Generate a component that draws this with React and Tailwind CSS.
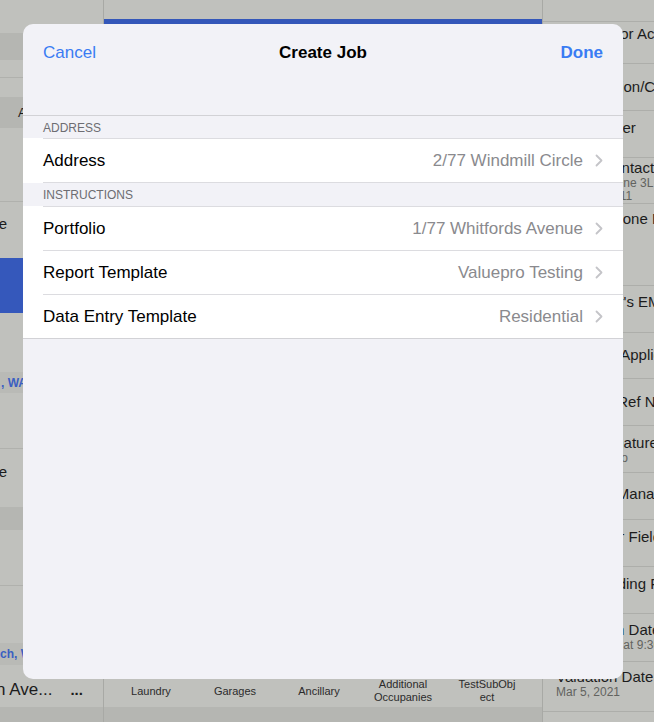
import React from "react";

const rightRows = [
  { h: "h-[42px]", pt: "pt-[3px]", t: "Purpose for Action" },
  { h: "h-[47px]", pt: "pt-[14px]", t: "Construction/Contract" },
  { h: "h-[47px]", pt: "pt-[8px]", t: "Lead Valuer" },
  { h: "h-[46px]", pt: "pt-[1px]", t: "Valuer Contact", s: ["Mrs Jacqueline 3L", "Ph 0400 11 11"] },
  { h: "h-[82px]", pt: "pt-[6px]", t: "Mobile Phone Number" },
  { h: "h-[47px]", pt: "pt-[7px]", t: "Guarantor's EMail" },
  { h: "h-[46px]", pt: "pt-[13px]", t: "Borrower Application" },
  { h: "h-[47px]", pt: "pt-[14px]", t: "Lender's Ref No." },
  { h: "h-[47px]", pt: "pt-[8px]", t: "Loan Signature", s: ["Received: No"] },
  { h: "h-[47px]", pt: "pt-[12px]", t: "Property Manager" },
  { h: "h-[47px]", pt: "pt-[8px]", t: "Purchaser Fields" },
  { h: "h-[47px]", pt: "pt-[8px]", t: "Main Building Floor" },
  { h: "h-[48px]", pt: "pt-[7px]", t: "Inspection Date", s: ["Mar 5, 2021 at 9:30 AM"] },
  { h: "h-[50px]", pt: "pt-[6px]", t: "Valuation Date", s: ["Mar 5, 2021"] },
];

function Chevron() {
  return (
    <svg width="8" height="13" viewBox="0 0 8 13" className="ml-[12px] shrink-0">
      <path d="M1.5 1.5 L6.5 6.5 L1.5 11.5" fill="none" stroke="#c4c4c8" strokeWidth="1.8" strokeLinecap="round" strokeLinejoin="round" />
    </svg>
  );
}

function Row({ label, value }) {
  return (
    <div className="flex h-[44px] items-center border-t border-[#dcdce0] pr-[20px]">
      <span className="text-[17px] text-black">{label}</span>
      <span className="ml-auto text-[17px] text-[#8a8a8e]">{value}</span>
      <Chevron />
    </div>
  );
}

export default function App() {
  return (
    <div className="relative flex h-[722px] w-[654px] overflow-hidden bg-[#c0c1bd] font-['Liberation_Sans',Arial,sans-serif] text-[#1c1c1c]">
      {/* Left column */}
      <div className="flex w-[104px] shrink-0 flex-col border-r border-[#a8a9a5]">
        <div className="h-[33px]" />
        <div className="h-[27px] bg-[#b5b6b2]" />
        <div className="h-[18px] border-b border-[#b0b1ad]" />
        <div className="h-[19px]" />
        <div className="flex h-[31px] items-center bg-[#b5b6b2] pl-[18px] text-[13px]">All</div>
        <div className="h-[74px] border-b border-[#b0b1ad]" />
        <div className="flex h-[56px] items-start justify-end pr-[96px] pt-[11px] text-[15px]">
          <span>Avenue</span>
        </div>
        <div className="h-[55px] bg-[#3558bb]" />
        <div className="h-[59px]" />
        <div className="flex h-[21px] items-center bg-[#b9bab6] pl-[1px] text-[12px] font-bold text-[#3b5fc2]">, WA</div>
        <div className="h-[56px] border-b border-[#b0b1ad]" />
        <div className="flex h-[58px] items-start justify-end pr-[96px] pt-[12px] text-[15px]">
          <span>Terrace</span>
        </div>
        <div className="h-[23px] bg-[#b5b6b2]" />
        <div className="h-[56px] border-b border-[#b0b1ad]" />
        <div className="h-[57px]" />
        <div className="flex h-[22px] items-center bg-[#b9bab6] text-[12px] font-bold text-[#3b5fc2]">ch, WA</div>
        <div className="flex h-[42px] items-start pt-[12px] text-[17px]">
          <span className="-ml-[4px]">n Ave...</span>
          <span className="ml-[18px] mt-[2px] text-[15px] font-bold">...</span>
        </div>
        <div className="flex-1 bg-[#b5b6b2]" />
      </div>

      {/* Middle column */}
      <div className="flex w-[439px] shrink-0 flex-col border-r border-[#a8a9a5]">
        <div className="h-[19px]" />
        <div className="h-[60px] bg-[#3457b9]" />
        <div className="flex-1" />
        <div className="flex h-[29px] items-center pb-[3px] pl-[5px]">
          {["Laundry", "Garages", "Ancillary", "Additional Occupanies", "TestSubObject"].map((t) => (
            <div key={t} className="flex w-[84px] justify-center">
              <span className="w-[62px] break-words text-center text-[11px] font-medium leading-[13px] text-[#2b2b2b]">{t}</span>
            </div>
          ))}
        </div>
        <div className="h-[15px] bg-[#b5b6b2]" />
      </div>

      {/* Right column */}
      <div className="flex min-w-0 flex-1 flex-col">
        <div className="h-[22px] shrink-0 border-b border-[#adaeaa]" />
        {rightRows.map((r) => (
          <div key={r.t} className={`${r.h} ${r.pt} shrink-0 whitespace-nowrap border-b border-[#adaeaa] pl-[13px]`}>
            <div className="text-[15px] leading-[18px] text-[#1c1c1c]">{r.t}</div>
            {r.s && r.s.map((s) => (
              <div key={s} className="text-[12px] leading-[13px] text-[#62635f]">{s}</div>
            ))}
          </div>
        ))}
        <div className="flex-1" />
      </div>

      {/* Modal sheet */}
      <div className="absolute left-[23px] top-[24px] flex h-[655px] w-[600px] flex-col overflow-hidden rounded-[10px] bg-[#f2f2f7]">
        <div className="grid h-[57px] shrink-0 grid-cols-3 items-center px-[20px]">
          <span className="text-[17px] text-[#3a7cf3]">Cancel</span>
          <span className="text-center text-[17px] font-bold text-black">Create Job</span>
          <span className="text-right text-[17px] font-bold text-[#3a7cf3]">Done</span>
        </div>
        <div className="h-[34px] shrink-0" />
        <div className="flex h-[23px] shrink-0 items-center border-t border-[#d2d2d6] pl-[20px] pt-[1px] text-[12px] text-[#6d6d72]">ADDRESS</div>
        <div className="shrink-0 bg-white pl-[20px]">
          <div className="border-b border-[#dcdce0]">
            <Row label="Address" value="2/77 Windmill Circle" />
          </div>
        </div>
        <div className="flex h-[23px] shrink-0 items-center pl-[20px] pt-[1px] text-[12px] text-[#6d6d72]">INSTRUCTIONS</div>
        <div className="shrink-0 border-b border-[#d2d2d6] bg-white pl-[20px]">
          <Row label="Portfolio" value="1/77 Whitfords Avenue" />
          <Row label="Report Template" value="Valuepro Testing" />
          <Row label="Data Entry Template" value="Residential" />
        </div>
        <div className="flex-1" />
      </div>
    </div>
  );
}
